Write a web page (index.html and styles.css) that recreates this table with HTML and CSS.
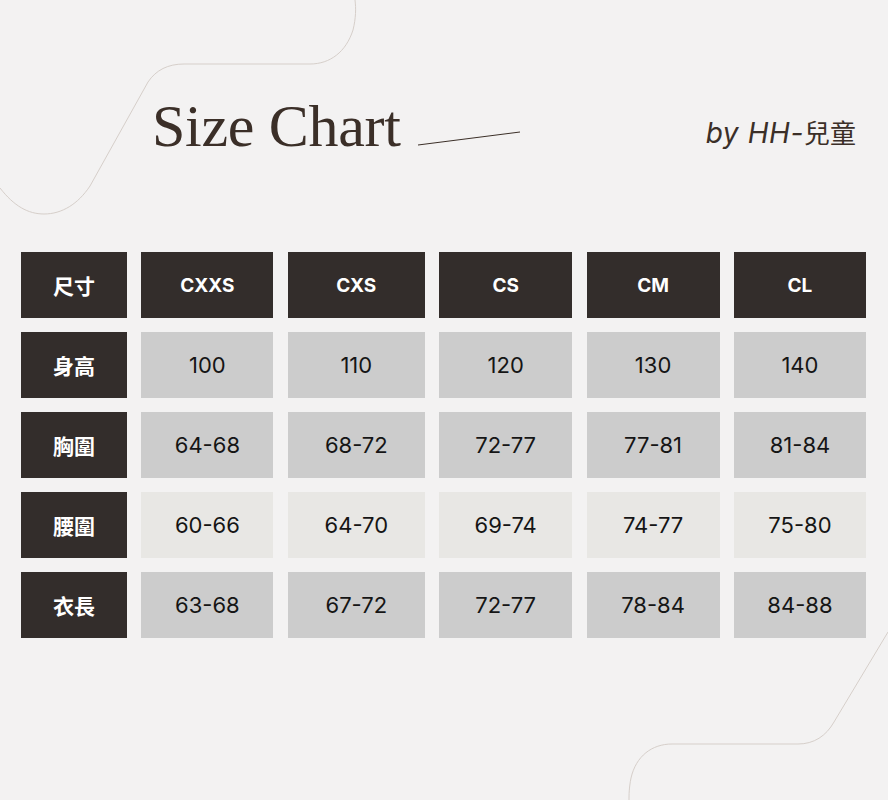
FILE: index.html
```html
<!DOCTYPE html>
<html lang="zh-Hant">
<head>
<meta charset="utf-8">
<title>Size Chart</title>
<link rel="stylesheet" href="styles.css">
</head>
<body>
<div class="page">
  <svg class="deco" width="888" height="800" viewBox="0 0 888 800" aria-hidden="true">
    <path d="M0 188 C14 206 28 214 44 214 C62 214 78 204 90 186 L148 82 C156 70 168 64 184 64 L310 64 C330 64 346 52 353 30 C356 18 356 8 355 0" fill="none" stroke="#d6cfca" stroke-width="1"/>
    <path d="M888 632 L834 722 C826 736 814 744 798 744 L672 744 C652 744 636 756 631 778 C629 788 629 795 629 800" fill="none" stroke="#d6cfca" stroke-width="1"/>
  </svg>
  <header class="header">
    <h1 class="title">Size Chart</h1>
    <svg class="rule" width="104" height="16" viewBox="0 0 104 16" aria-hidden="true"><path d="M0 14 L102 1" stroke="#3b2f28" stroke-width="1"/></svg>
    <p class="by"><span class="lat">by HH-</span>兒童</p>
  </header>
  <div class="chart">
    <div class="cell head cjk">尺寸</div>
    <div class="cell head">CXXS</div>
    <div class="cell head">CXS</div>
    <div class="cell head">CS</div>
    <div class="cell head">CM</div>
    <div class="cell head">CL</div>

    <div class="cell head cjk">身高</div>
    <div class="cell val">100</div>
    <div class="cell val">110</div>
    <div class="cell val">120</div>
    <div class="cell val">130</div>
    <div class="cell val">140</div>

    <div class="cell head cjk">胸圍</div>
    <div class="cell val">64-68</div>
    <div class="cell val">68-72</div>
    <div class="cell val">72-77</div>
    <div class="cell val">77-81</div>
    <div class="cell val">81-84</div>

    <div class="cell head cjk">腰圍</div>
    <div class="cell val light">60-66</div>
    <div class="cell val light">64-70</div>
    <div class="cell val light">69-74</div>
    <div class="cell val light">74-77</div>
    <div class="cell val light">75-80</div>

    <div class="cell head cjk">衣長</div>
    <div class="cell val">63-68</div>
    <div class="cell val">67-72</div>
    <div class="cell val">72-77</div>
    <div class="cell val">78-84</div>
    <div class="cell val">84-88</div>
  </div>
</div>
</body>
</html>
```
FILE: styles.css
```css
html, body {
  margin: 0;
  padding: 0;
  background: #f3f2f2;
}
.page {
  position: relative;
  width: 888px;
  height: 800px;
  overflow: hidden;
  background: #f3f2f2;
}
.deco {
  position: absolute;
  left: 0;
  top: 0;
  pointer-events: none;
}
.header {
  position: relative;
  height: 252px;
  box-sizing: border-box;
  padding-top: 96px;
  display: flex;
  align-items: flex-start;
}
.title {
  margin: 0 0 0 152px;
  width: 266px;
  font-family: "Liberation Serif", "DejaVu Serif", serif;
  font-weight: 400;
  font-size: 60px;
  line-height: 60px;
  color: #3b2f28;
  letter-spacing: -0.3px;
}
.rule {
  margin-top: 35px;
  display: block;
}
.by {
  margin: 24px 32px 0 auto;
  font-family: "Inter", "Noto Sans CJK TC", sans-serif;
  font-size: 26px;
  line-height: 26px;
  color: #3b2f28;
}
.by .lat {
  font-style: oblique 10deg;
  font-size: 28px;
  letter-spacing: 0.6px;
}
.chart {
  position: relative;
  margin-left: 21px;
  display: grid;
  grid-template-columns: 106px 132px 137px 133px 133px 132px;
  grid-auto-rows: 66px;
  column-gap: 14.4px;
  row-gap: 14px;
}
.cell {
  display: flex;
  align-items: center;
  justify-content: center;
}
.head {
  background: #332d2b;
  color: #ffffff;
  font-family: "Inter", "Noto Sans CJK TC", sans-serif;
  font-weight: 700;
  font-size: 19px;
}
.head.cjk {
  font-size: 21px;
}
.val {
  background: #cccccc;
  color: #151515;
  font-family: "Inter", "Noto Sans", sans-serif;
  font-weight: 400;
  font-size: 22px;
}
.val.light {
  background: #e8e7e4;
}
```
